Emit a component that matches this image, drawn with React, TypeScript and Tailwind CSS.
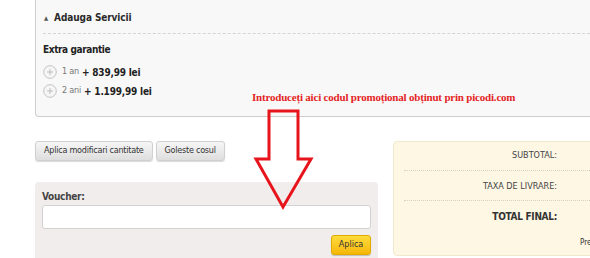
import React from "react";

const ui = { fontFamily: '"DejaVu Sans Condensed", "DejaVu Sans", sans-serif' };

function PlusCircle() {
  return (
    <svg width="14" height="14" viewBox="0 0 14 14" className="shrink-0">
      <circle cx="7" cy="7" r="6.3" fill="#f6f6f6" stroke="#c2c2c2" strokeWidth="1" />
      <path d="M7 4v6M4 7h6" stroke="#bcbcbc" strokeWidth="1" />
    </svg>
  );
}

export default function App() {
  return (
    <div className="relative w-[590px] h-[258px] overflow-hidden bg-white text-[#222]" style={ui}>
      {/* top services panel */}
      <div className="ml-[35px] w-[600px] h-[117px] bg-[#f8f8f8] border-l border-b border-[#cfcfcf] rounded-bl-[4px] pl-[7px] pt-[10px]">
        <div className="flex items-center h-[14px] text-[10px] font-bold tracking-[-0.1px] text-[#2a2a2a]">
          <span className="text-[6px] ml-[1px] mr-[6px] text-[#555]">▲</span>
          <span>Adauga Servicii</span>
        </div>
        <div className="mt-[9px] border-t border-dashed border-[#d4d4d4]" />
        <div className="mt-[8px] h-[14px] flex items-center text-[10px] font-bold tracking-[-0.4px]">Extra garantie</div>
        <div className="mt-[9px] flex flex-col gap-[5px]">
          <div className="flex items-center h-[14px]">
            <PlusCircle />
            <span className="ml-[5px] text-[9px] tracking-[-0.2px] text-[#777]">1 an</span>
            <span className="ml-[3px] text-[10px] font-bold tracking-[-0.2px] text-[#222]">+ 839,99 lei</span>
          </div>
          <div className="flex items-center h-[14px]">
            <PlusCircle />
            <span className="ml-[5px] text-[9px] tracking-[-0.2px] text-[#777]">2 ani</span>
            <span className="ml-[3px] text-[10px] font-bold tracking-[-0.2px] text-[#222]">+ 1.199,99 lei</span>
          </div>
        </div>
      </div>

      {/* lower section */}
      <div className="flex mt-[24px]">
        <div className="ml-[35px] w-[343px] shrink-0">
          <div className="flex gap-[3px]">
            <button className="h-[20px] px-[8px] text-[9px] tracking-[-0.25px] text-[#333] rounded-[3px] border border-[#d0d0d0] bg-gradient-to-b from-[#f6f6f6] to-[#dedede] shadow-[0_1px_1px_rgba(0,0,0,0.15)]">
              Aplica modificari cantitate
            </button>
            <button className="h-[20px] px-[8px] text-[9px] tracking-[-0.25px] text-[#333] rounded-[3px] border border-[#d0d0d0] bg-gradient-to-b from-[#f6f6f6] to-[#dedede] shadow-[0_1px_1px_rgba(0,0,0,0.15)]">
              Goleste cosul
            </button>
          </div>
          <div className="mt-[21px] h-[80px] bg-[#f0edec] rounded-t-[4px] px-[7px] pt-[7px]">
            <div className="text-[10px] font-bold tracking-[-0.3px] text-[#444] h-[14px] flex items-center">Voucher:</div>
            <div className="mt-[2px] h-[24px] bg-white border border-[#d2d2d2] rounded-[3px]" />
            <div className="flex justify-end mt-[6px]">
              <button className="h-[20px] w-[40px] text-[9px] text-[#333] rounded-[3px] border border-[#e0aa00] bg-gradient-to-b from-[#ffdc3a] to-[#f5b700] shadow-[0_1px_1px_rgba(0,0,0,0.2)]">
                Aplica
              </button>
            </div>
          </div>
        </div>

        <div className="ml-[15px] w-[220px] h-[115px] shrink-0 bg-[#fdf7e4] border border-[#f2e8cc] rounded-[4px] pl-[10px] pt-[7px]">
          <div className="h-[14px] flex items-center justify-end w-[153px] text-[9px] text-[#444]">SUBTOTAL:</div>
          <div className="mt-[7px] border-t border-dotted border-[#d8d0b8]" />
          <div className="mt-[9px] h-[14px] flex items-center justify-end w-[153px] text-[9px] text-[#444]">TAXA DE LIVRARE:</div>
          <div className="mt-[6px] border-t border-dotted border-[#d8d0b8]" />
          <div className="mt-[8px] h-[14px] flex items-center justify-end w-[153px] text-[10px] font-bold tracking-[-0.3px] text-[#333]">TOTAL FINAL:</div>
          <div className="mt-[15px] h-[10px] flex items-center pl-[176px] text-[8px] text-[#333] whitespace-nowrap">Prețurile</div>
        </div>
      </div>

      {/* annotation */}
      <div
        className="absolute left-[252px] top-[90px] text-[11px] leading-[14px] font-bold tracking-[-0.2px] text-[#e41f26] whitespace-nowrap"
        style={{ fontFamily: '"Liberation Serif", serif' }}
      >
        Introduceți aici codul promoțional obținut prin picodi.com
      </div>
      <svg className="absolute left-0 top-0" width="590" height="258" viewBox="0 0 590 258">
        <polygon
          points="269,111 298,111 298,159 311,159 283,207 256,159 269,159"
          fill="none"
          stroke="#e8141c"
          strokeWidth="3"
          strokeLinejoin="miter"
        />
      </svg>
    </div>
  );
}
